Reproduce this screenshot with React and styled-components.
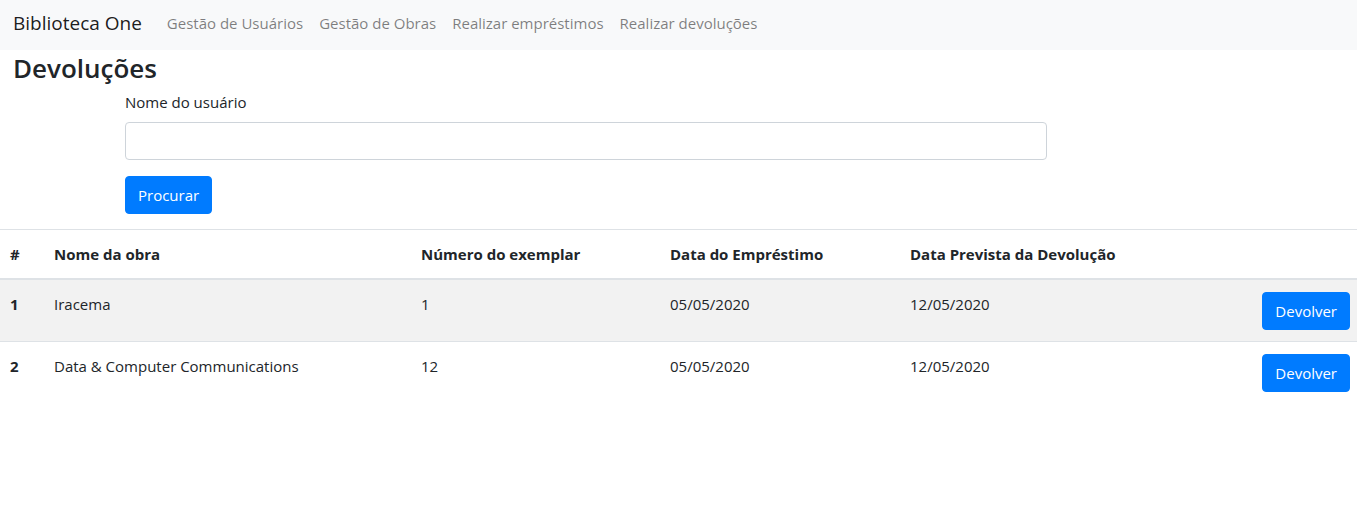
import React from 'react'
import styled, { createGlobalStyle } from 'styled-components'

const GlobalStyle = createGlobalStyle`
  * { box-sizing: border-box; }
  body {
    margin: 0;
    font-family: "Open Sans", "Noto Sans", "Liberation Sans", sans-serif;
    font-size: 15px;
    line-height: 24px;
    color: #212529;
    background: #fff;
  }
`

const NavBar = styled.nav`
  height: 50px;
  background: #f8f9fa;
  display: flex;
  align-items: center;
  padding: 0 13px 5px;
`

const Brand = styled.a`
  font-size: 19px;
  color: rgba(0, 0, 0, 0.9);
  margin-right: 17px;
  text-decoration: none;
  line-height: 30px;
`

const NavLinks = styled.div`
  display: flex;
`

const NavLink = styled.a`
  color: rgba(0, 0, 0, 0.5);
  padding: 0 8px;
  text-decoration: none;
  line-height: 24px;
`

const Title = styled.h3`
  font-size: 26px;
  font-weight: 600;
  line-height: 1.2;
  margin: 3px 13px 6px;
`

const Form = styled.form`
  margin-left: 125px;
  width: 922px;
`

const FormGroup = styled.div`
  margin-bottom: 16px;
`

const Label = styled.label`
  display: inline-block;
  margin-bottom: 8px;
`

const Input = styled.input`
  display: block;
  width: 100%;
  height: 38px;
  border: 1px solid #ced4da;
  border-radius: 4px;
  padding: 6px 12px;
  font: inherit;
`

const Button = styled.button`
  display: inline-block;
  background: #007bff;
  border: 1px solid #007bff;
  color: #fff;
  border-radius: 4px;
  height: 38px;
  padding: 0 12px;
  font: inherit;
  line-height: 24px;
  cursor: pointer;
`

const Table = styled.table`
  width: 100%;
  margin-top: 15px;
  border-collapse: collapse;
  table-layout: fixed;
`

const HeadCell = styled.th`
  text-align: left;
  font-weight: 700;
  padding: 12px 12px 12px ${p => (p.first ? '10px' : '12px')};
  border-top: 1px solid #dee2e6;
  border-bottom: 2px solid #dee2e6;
  vertical-align: bottom;
`

const Row = styled.tr`
  background: ${p => (p.striped ? 'rgba(0, 0, 0, 0.05)' : 'transparent')};
`

const Cell = styled.td`
  padding: 12px ${p => (p.last ? '7px' : '12px')} 11px ${p => (p.first ? '10px' : '12px')};
  border-top: 1px solid #dee2e6;
  vertical-align: top;
  text-align: ${p => (p.last ? 'right' : 'left')};
  font-weight: ${p => (p.first ? 700 : 400)};
`

const emprestimos = [
  { id: 1, obra: 'Iracema', exemplar: '1', data: '05/05/2020', prevista: '12/05/2020' },
  { id: 2, obra: 'Data & Computer Communications', exemplar: '12', data: '05/05/2020', prevista: '12/05/2020' }
]

export default function App() {
  return (
    <>
      <GlobalStyle />
      <NavBar>
        <Brand href="#">Biblioteca One</Brand>
        <NavLinks>
          <NavLink href="#">Gestão de Usuários</NavLink>
          <NavLink href="#">Gestão de Obras</NavLink>
          <NavLink href="#">Realizar empréstimos</NavLink>
          <NavLink href="#">Realizar devoluções</NavLink>
        </NavLinks>
      </NavBar>
      <Title>Devoluções</Title>
      <Form onSubmit={e => e.preventDefault()}>
        <FormGroup>
          <Label>Nome do usuário</Label>
          <Input type="text" />
        </FormGroup>
        <Button type="submit">Procurar</Button>
      </Form>
      <Table>
        <colgroup>
          <col style={{ width: 42 }} />
          <col style={{ width: 367 }} />
          <col style={{ width: 249 }} />
          <col style={{ width: 240 }} />
          <col style={{ width: 260 }} />
          <col />
        </colgroup>
        <thead>
          <tr>
            <HeadCell first>#</HeadCell>
            <HeadCell>Nome da obra</HeadCell>
            <HeadCell>Número do exemplar</HeadCell>
            <HeadCell>Data do Empréstimo</HeadCell>
            <HeadCell>Data Prevista da Devolução</HeadCell>
            <HeadCell />
          </tr>
        </thead>
        <tbody>
          {emprestimos.map((item, idx) => (
            <Row key={item.id} striped={idx % 2 === 0}>
              <Cell first>{item.id}</Cell>
              <Cell>{item.obra}</Cell>
              <Cell>{item.exemplar}</Cell>
              <Cell>{item.data}</Cell>
              <Cell>{item.prevista}</Cell>
              <Cell last>
                <Button type="button">Devolver</Button>
              </Cell>
            </Row>
          ))}
        </tbody>
      </Table>
    </>
  )
}
